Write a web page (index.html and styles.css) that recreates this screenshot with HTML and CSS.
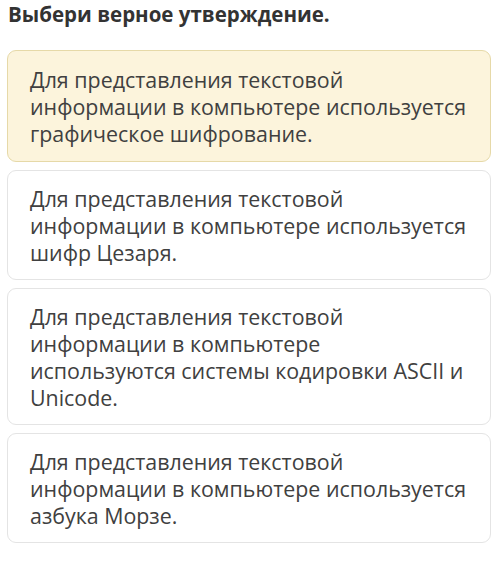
FILE: index.html
```html
<!DOCTYPE html>
<html lang="ru">
<head>
<meta charset="utf-8">
<link rel="stylesheet" href="styles.css">
</head>
<body>
<div class="page">
  <h1 class="title">Выбери верное утверждение.</h1>
  <div class="options">
    <div class="option selected">Для представления текстовой информации в компьютере используется графическое шифрование.</div>
    <div class="option">Для представления текстовой информации в компьютере используется шифр Цезаря.</div>
    <div class="option">Для представления текстовой информации в компьютере используются системы кодировки ASCII и Unicode.</div>
    <div class="option">Для представления текстовой информации в компьютере используется азбука Морзе.</div>
  </div>
</div>
</body>
</html>
```
FILE: styles.css
```css
html, body {
  margin: 0;
  padding: 0;
  background: #ffffff;
}
body {
  font-family: "Open Sans", "Noto Sans", sans-serif;
  color: #404040;
}
.page {
  padding: 0 9px 0 7px;
}
.title {
  margin: 0;
  padding: 0 0 0 1px;
  font-size: 20.5px;
  font-weight: 700;
  line-height: 29px;
  color: #333333;
  height: 50px;
}
.options {
  display: flex;
  flex-direction: column;
  gap: 8px;
}
.option {
  border: 1px solid #e4e4e4;
  border-radius: 9px;
  padding: 13.5px 22px 13.5px 22px;
  font-size: 21.4px;
  line-height: 27px;
  background: #ffffff;
}
.option.selected {
  padding-top: 15px;
  padding-bottom: 14px;
  background: #fcf4dc;
  border-color: #e6d9a8;
}
```
